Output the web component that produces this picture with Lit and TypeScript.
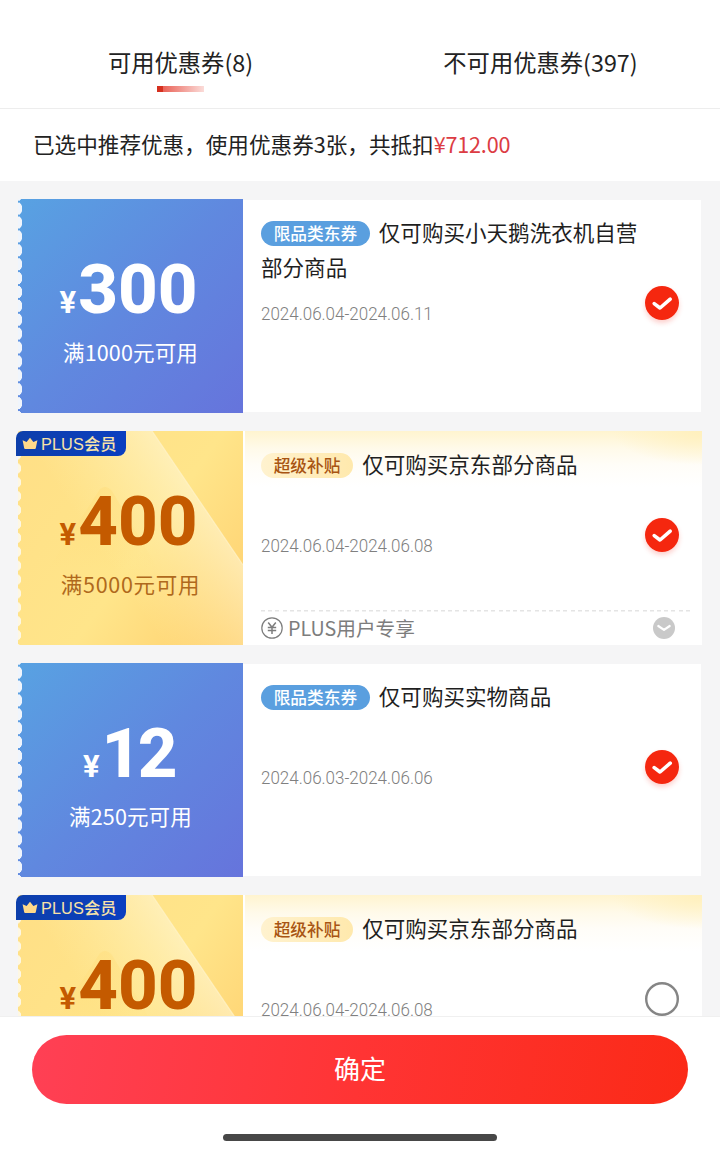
import { LitElement, html, svg, css, nothing } from 'lit';
import { customElement, property, state } from 'lit/decorators.js';
import { classMap } from 'lit/directives/class-map.js';

interface Coupon {
  amount: string;
  condition: string;
  tag: string;
  title: string;
  period: string;
  plus: boolean;
  selected: boolean;
}

const COUPONS: Coupon[] = [
  { amount: '300', condition: '满1000元可用', tag: '限品类东券', title: '仅可购买小天鹅洗衣机自营部分商品', period: '2024.06.04-2024.06.11', plus: false, selected: true },
  { amount: '400', condition: '满5000元可用', tag: '超级补贴', title: '仅可购买京东部分商品', period: '2024.06.04-2024.06.08', plus: true, selected: true },
  { amount: '12', condition: '满250元可用', tag: '限品类东券', title: '仅可购买实物商品', period: '2024.06.03-2024.06.06', plus: false, selected: true },
  { amount: '400', condition: '满5000元可用', tag: '超级补贴', title: '仅可购买京东部分商品', period: '2024.06.04-2024.06.08', plus: true, selected: false },
];

@customElement('coupon-card')
export class CouponCard extends LitElement {
  @property({ attribute: false }) coupon!: Coupon;

  static styles = css`
    :host { display: flex; position: relative; height: 214px; flex: none; padding: 0 19px 0 18px; }
    .ticket {
      width: 225px; flex: none; box-sizing: border-box; padding-top: 57px; position: relative; overflow: hidden;
      display: flex; flex-direction: column; align-items: center; color: #fff;
      background: linear-gradient(135deg, #58a2e2 0%, #6088df 50%, #6674dc 100%);
    }
    .ticket::before {
      content: ''; position: absolute; left: 0; top: 0; bottom: 0; width: 5px;
      background: radial-gradient(ellipse 4.4px 6.5px at 0 50%, #f0f5fc 92%, transparent 100%) 0 2.7px / 5px 13.9px repeat-y;
    }
    .plus .ticket { color: #c45a00; background: linear-gradient(125deg, #ffdf86 0%, #ffe58a 55%, #ffce6c 100%); }
    .plus .ticket::before {
      background: radial-gradient(ellipse 3.4px 5.2px at 0 50%, #fdf7e4 85%, transparent 100%) 0 2.7px / 5px 13.9px repeat-y;
    }
    .shine { position: absolute; inset: 0; width: 225px; height: 214px; }
    .price { display: flex; align-items: baseline; height: 68px; line-height: 68px; font-family: Roboto, sans-serif; font-weight: 800; position: relative; margin-left: -4px; }
    .yen { font-size: 31px; font-weight: 700; margin-right: 2px; }
    .num { font-size: 69px; }
    .short { letter-spacing: -3.5px; }
    .condition { position: relative; margin-top: 12px; line-height: 32px; font-size: 21.5px; letter-spacing: 0.15px; }
    .plus .condition { color: #b0691c; letter-spacing: 0.7px; }
    .badge {
      position: absolute; left: 16px; top: 0; width: 110px; height: 24.5px; box-sizing: border-box; padding-left: 6px;
      display: flex; align-items: center; gap: 3px; border-radius: 7px 0 8px 0; background: linear-gradient(90deg, #0d3fab, #0b3fc0);
      color: #f7e2a8; font-size: 16.3px; font-weight: 500; line-height: 24px; white-space: nowrap;
    }
    .latin { font-family: 'Liberation Sans', sans-serif; font-weight: 400; letter-spacing: 0.1px; }
    .badge svg { width: 16px; height: 13px; flex: none; }
    .panel { flex: 1; min-width: 0; margin: 1px 0 1px; background: #fff; display: flex; flex-direction: column; }
    .plus .panel { margin: 0 -1px 0 0; background: linear-gradient(#fff, #fff) left / 2px 100% no-repeat, radial-gradient(ellipse 90px 34px at 100% 0, #fff0bd 0%, #fff0bd00 100%), linear-gradient(180deg, #fff4cf 0, #fffaea 18px, #fffdf8 34px, #fff 56px); }
    .wrap { display: contents; }
    .body { display: flex; height: 178px; padding: 0 22px 0 18px; align-items: flex-start; flex: none; }
    .plus .body { height: 179px; padding-right: 23px; }
    .text { flex: 1; min-width: 0; padding-top: 15px; }
    .plus .text { padding-top: 16px; }
    .title { font-size: 21.55px; line-height: 34.5px; min-height: 69px; color: #1f1f1f; }
    .tag {
      display: inline-block; vertical-align: 1.5px; height: 25px; line-height: 24px; padding: 0 12.7px; margin-right: 9px;
      border-radius: 13px; background: #5a9fdf; color: #fff; font-size: 16.7px; font-weight: 500;
    }
    .plus .tag { background: linear-gradient(90deg, #fff2cf, #ffe9ad); color: #a85412; }
    .period { margin-top: 18px; font: 300 18.6px/24px Roboto, sans-serif; color: #808080; transform: scaleX(0.913); transform-origin: left; white-space: nowrap; }
    .check { margin-top: 86px; width: 34px; height: 34px; flex: none; overflow: visible; border-radius: 50%; }
    .plus .check { margin-top: 87px; }
    .check.on { box-shadow: 0 3px 5px #f52a1a38; }
    .note { display: flex; align-items: center; height: 35px; box-sizing: border-box; margin: 0 12px 0 18px; padding-right: 15px; color: #7d7d7d; font-size: 19.7px;
      background: repeating-linear-gradient(90deg, #e4e4e4 0 4px, transparent 4px 7.2px) 0 0 / 100% 1.5px no-repeat; }
    .note svg { width: 22px; height: 22px; flex: none; }
    .note span { flex: 1; margin-left: 5px; line-height: 30px; }
  `;

  private mark() {
    return this.coupon.selected
      ? svg`<circle cx="17" cy="17" r="17" fill="#f5270f"/><path d="M9.2 17.6 15 22 25.2 13.2" fill="none" stroke="#fff" stroke-width="3.6" stroke-linecap="round" stroke-linejoin="round"/>`
      : svg`<circle cx="17" cy="17" r="15.8" fill="#fff" stroke="#858585" stroke-width="2.4"/>`;
  }

  render() {
    const c = this.coupon;
    return html`
      <div class=${classMap({ wrap: true, plus: c.plus })}>
        <div class="ticket">
          ${c.plus ? html`<svg class="shine" viewBox="0 0 225 214">
            <defs>
              <linearGradient id="facet" gradientUnits="userSpaceOnUse" x1="185" y1="58" x2="85" y2="125">
                <stop offset="0" stop-color="#fff8dc" stop-opacity=".62"/><stop offset="1" stop-color="#fff2b5" stop-opacity="0"/>
              </linearGradient>
              <linearGradient id="peak" x1="0" y1="0" x2="0" y2="1">
                <stop offset="0" stop-color="#ffdc78" stop-opacity=".4"/><stop offset="1" stop-color="#ffdc78" stop-opacity="0"/>
              </linearGradient>
            </defs>
            <path d="M0 0H134L225 134V214H0Z" fill="url(#facet)"/>
            <path d="M82 58 30 138H140L94 60Q88 53 82 58Z" fill="url(#peak)"/>
            <path d="M134 0 225 134" stroke="#fff4cc" stroke-opacity=".7" stroke-width="1.2"/>
          </svg>` : nothing}
          <div class="price"><span class="yen">¥</span><span class=${classMap({ num: true, short: c.amount.length < 3 })}>${c.amount}</span></div>
          <div class="condition">${c.condition}</div>
        </div>
        <div class="panel">
          <div class="body">
            <div class="text">
              <div class="title"><span class="tag">${c.tag}</span>${c.title}</div>
              <div class="period">${c.period}</div>
            </div>
            <svg class=${classMap({ check: true, on: c.selected })} viewBox="0 0 34 34">${this.mark()}</svg>
          </div>
          ${c.plus ? html`<div class="note">
            <svg viewBox="0 0 22 22" fill="none" stroke="#7d7d7d" stroke-width="1.2"><circle cx="11" cy="11" r="10.2"/><path d="M7.2 5.5 11 10.2 14.8 5.5M11 10.2V17M6.8 10.5H15.2M6.8 13.5H15.2" stroke-width="1.5"/></svg>
            <span>PLUS用户专享</span>
            <svg viewBox="0 0 22 22"><circle cx="11" cy="11" r="11" fill="#c9c9c9"/><path d="M5.3 9 11 12.8 16.7 9" fill="none" stroke="#fff" stroke-width="2.2" stroke-linecap="round" stroke-linejoin="round"/></svg>
          </div>` : nothing}
        </div>
        ${c.plus ? html`<div class="badge">
          <svg viewBox="0 0 16 13"><path d="M.6 3.2 4.6 5 8 .8 11.4 5 15.4 3.2 13.8 11.2Q13.6 12 12.8 12H3.2Q2.4 12 2.2 11.2Z" fill="#ffd98a"/></svg>
          <span><span class="latin">PLUS</span>会员</span>
        </div>` : nothing}
      </div>`;
  }
}

@customElement('app-root')
export class AppRoot extends LitElement {
  @state() private coupons = COUPONS;

  static styles = css`
    :host {
      display: flex; flex-direction: column; height: 1152px; overflow: hidden; background: #fff; color: #222;
      font-family: 'Noto Sans CJK SC', sans-serif;
    }
    .tabs { display: grid; grid-template-columns: 1fr 1fr; height: 109px; box-sizing: border-box; border-bottom: 1px solid #ededed; flex: none; }
    .tab { display: flex; flex-direction: column; align-items: center; padding: 45px 0 0 1px; font-size: 23.3px; line-height: 34px; }
    .line { width: 47px; height: 6px; margin: 7px 1px 0 0; background: linear-gradient(90deg, #d5301f 0 6px, #ea6358 6px, #fbdcd9 100%); }
    .summary { height: 72px; line-height: 69px; padding-left: 33px; font-size: 21.6px; flex: none; }
    .money { color: #dc3c43; letter-spacing: -0.2px; }
    .list { flex: 1; min-height: 0; overflow: hidden; background: #f5f5f6; display: flex; flex-direction: column; gap: 18px; padding-top: 18px; }
    .bottom { height: 136px; box-sizing: border-box; border-top: 1px solid #f0f0f0; padding: 18px 32px 0; display: flex; flex-direction: column; align-items: center; flex: none; background: #fff; }
    .confirm { width: 100%; height: 69px; box-sizing: border-box; border: 0; border-radius: 35px; padding: 0 0 4px; font: 400 26px/38px 'Noto Sans CJK SC', sans-serif; color: #fff;
      background: linear-gradient(100deg, #ff4055 0%, #ff3434 50%, #fb2a17 100%); }
    .home { width: 274px; height: 7px; border-radius: 4px; background: #474747; margin-top: 30px; }
  `;

  render() {
    return html`
      <nav class="tabs">
        <div class="tab">可用优惠券(8)<i class="line"></i></div>
        <div class="tab">不可用优惠券(397)</div>
      </nav>
      <div class="summary">已选中推荐优惠，使用优惠券3张，共抵扣<span class="money">¥712.00</span></div>
      <main class="list">${this.coupons.map((c) => html`<coupon-card .coupon=${c}></coupon-card>`)}</main>
      <footer class="bottom">
        <button class="confirm">确定</button>
        <div class="home"></div>
      </footer>`;
  }
}
